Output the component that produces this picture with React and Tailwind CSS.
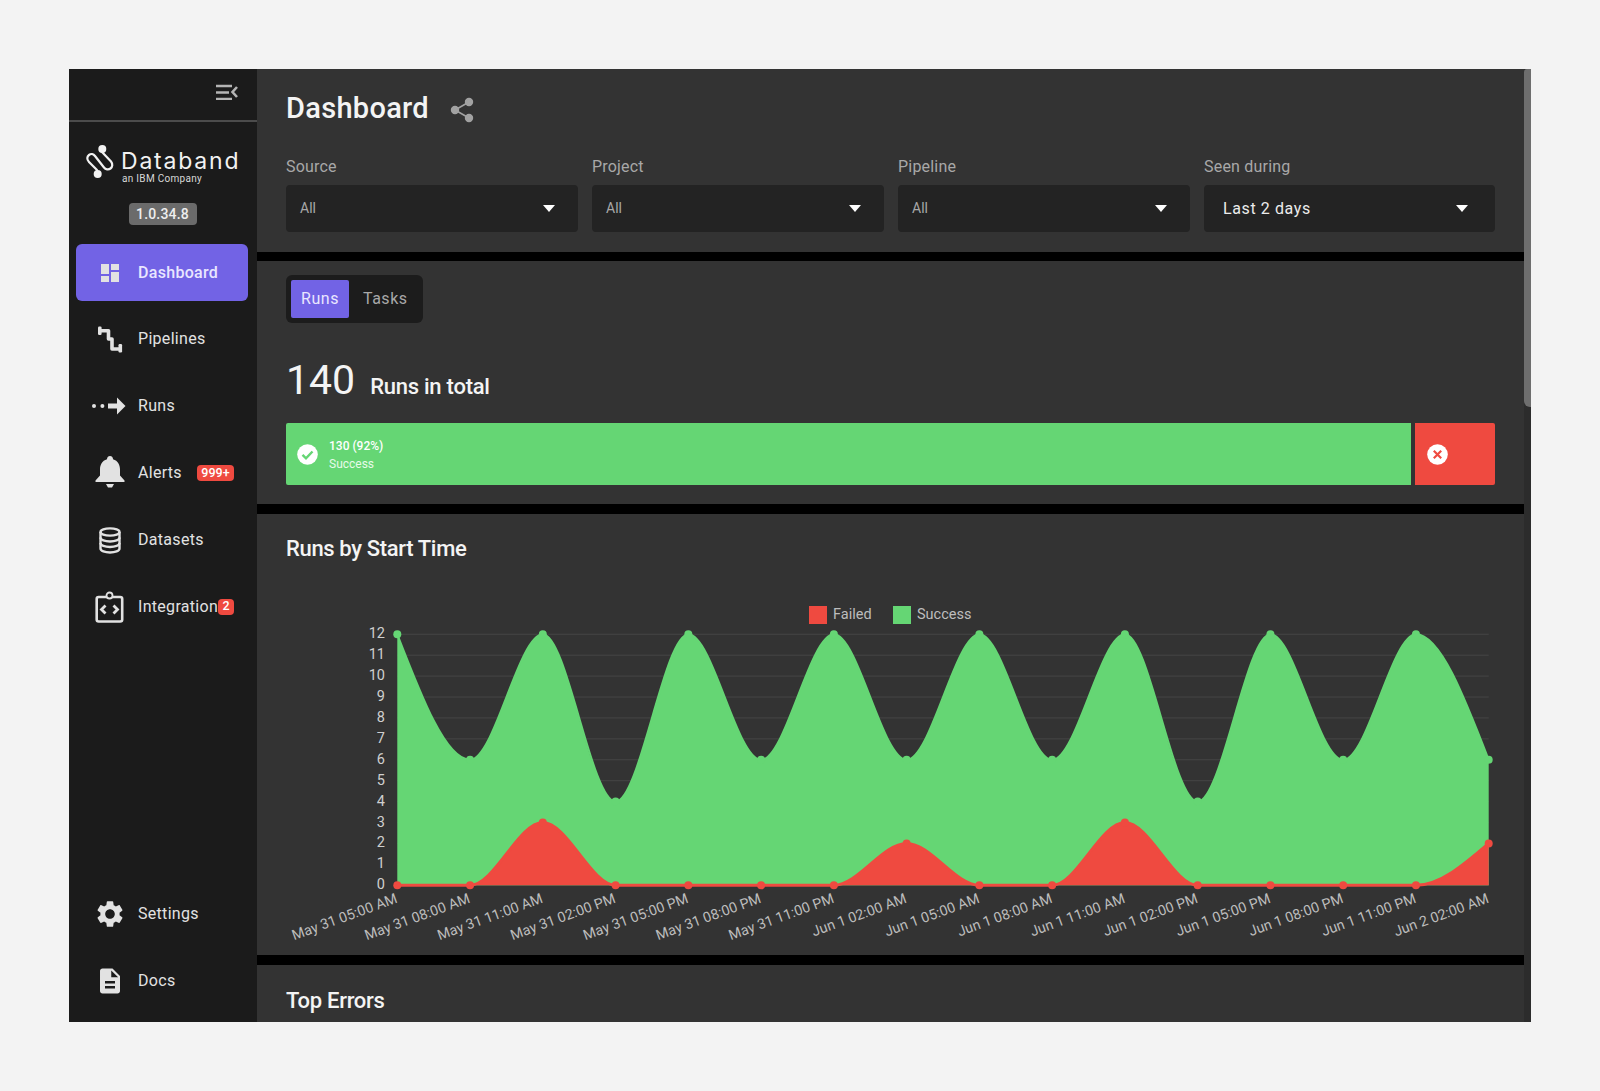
import React from "react";

const GREEN = "#65d674";
const RED = "#ef4a40";

const X0 = 111.3;
const STEP = 72.76;
const Y0 = 265.3;
const UNIT = 20.92;
const totals = [12, 6, 12, 4, 12, 6, 12, 6, 12, 6, 12, 4, 12, 6, 12, 6];
const failed = [0, 0, 3, 0, 0, 0, 0, 2, 0, 0, 3, 0, 0, 0, 0, 2];
const ticks = [
  "May 31 05:00 AM", "May 31 08:00 AM", "May 31 11:00 AM", "May 31 02:00 PM",
  "May 31 05:00 PM", "May 31 08:00 PM", "May 31 11:00 PM", "Jun 1 02:00 AM",
  "Jun 1 05:00 AM", "Jun 1 08:00 AM", "Jun 1 11:00 AM", "Jun 1 02:00 PM",
  "Jun 1 05:00 PM", "Jun 1 08:00 PM", "Jun 1 11:00 PM", "Jun 2 02:00 AM",
];

const px = (i) => X0 + i * STEP;
const py = (v) => Y0 - v * UNIT;

function monotonePath(vals) {
  const ys = vals.map(py);
  const n = ys.length;
  const t = new Array(n).fill(0);
  for (let i = 1; i < n - 1; i++) {
    const s0 = (ys[i] - ys[i - 1]) / STEP;
    const s1 = (ys[i + 1] - ys[i]) / STEP;
    const p = (s0 + s1) / 2;
    t[i] = (Math.sign(s0) + Math.sign(s1)) * Math.min(Math.abs(s0), Math.abs(s1), 0.5 * Math.abs(p)) || 0;
  }
  t[0] = ((3 * (ys[1] - ys[0])) / STEP - t[1]) / 2;
  t[n - 1] = ((3 * (ys[n - 1] - ys[n - 2])) / STEP - t[n - 2]) / 2;
  const dx = STEP / 3;
  let d = `M${px(0)} ${ys[0]}`;
  for (let i = 0; i < n - 1; i++) {
    d += ` C${px(i) + dx} ${ys[i] + dx * t[i]} ${px(i + 1) - dx} ${ys[i + 1] - dx * t[i + 1]} ${px(i + 1)} ${ys[i + 1]}`;
  }
  return d;
}

function Chart() {
  const top = monotonePath(totals);
  const bot = monotonePath(failed);
  const close = ` L${px(15)} ${Y0} L${px(0)} ${Y0} Z`;
  return (
    <svg width="1210" height="330" viewBox="0 0 1210 330" className="block">
      {Array.from({ length: 13 }, (_, v) => (
        <g key={v}>
          <line x1={X0} x2={px(15)} y1={py(v)} y2={py(v)} stroke="#464646" strokeWidth="1" />
          <text x="99" y={py(v) + 4} textAnchor="end" fontSize="14.5" fill="#cfcfcf">{v}</text>
        </g>
      ))}
      <path d={top + close} fill={GREEN} />
      <path d={top} fill="none" stroke={GREEN} strokeWidth="2" />
      {totals.map((v, i) => (
        <circle key={i} cx={px(i)} cy={py(v)} r="4" fill={GREEN} />
      ))}
      <path d={bot + close} fill={RED} />
      <path d={bot} fill="none" stroke={RED} strokeWidth="3" />
      {failed.map((v, i) => (
        <circle key={i} cx={px(i)} cy={py(v)} r="4" fill={RED} />
      ))}
      {ticks.map((s, i) => (
        <text
          key={s}
          x={px(i) + 1}
          y={Y0 + 17}
          textAnchor="end"
          fontSize="14.3"
          fill="#bdbdbd"
          transform={`rotate(-20 ${px(i) + 1} ${Y0 + 17})`}
        >
          {s}
        </text>
      ))}
    </svg>
  );
}

function Logo() {
  return (
    <svg width="30" height="36" viewBox="0 0 30 36" className="shrink-0">
      <path
        d="M13 26L5 18C2.500 15.500 3 12.500 5 11C7 9.500 9.500 10 11 12L20 23.500C21.500 25.500 24.500 26 26.500 24.500C28.500 23 29 20 27 17.500L18 8"
        fill="none"
        stroke="#f2f2f2"
        strokeWidth="2.200"
        strokeLinecap="round"
      />
      <circle cx="18.300" cy="5" r="4" fill="#f2f2f2" />
      <circle cx="13.700" cy="30" r="4" fill="#f2f2f2" />
    </svg>
  );
}

const Ic = ({ children, vb = "0 0 32 32", size = 32 }) => (
  <svg width={size} height={size} viewBox={vb} className="shrink-0 overflow-visible" fill="#e2e2e2">
    {children}
  </svg>
);

const icons = {
  dashboard: (
    <Ic vb="0 0 24 24" size={24}>
      <path d="M3 13h8V3H3v10zm0 8h8v-6H3v6zm10 0h8V11h-8v10zm0-18v6h8V3h-8z" />
    </Ic>
  ),
  pipelines: (
    <Ic>
      <path d="M6 7.700H14.500V16H18V26H25.500" fill="none" stroke="#e2e2e2" strokeWidth="3.600" strokeLinejoin="round" />
      <rect x="4" y="3.500" width="3.600" height="8.500" rx="1.200" />
      <rect x="24.500" y="21" width="3.600" height="8.500" rx="1.200" />
    </Ic>
  ),
  runs: (
    <Ic>
      <circle cx="0" cy="16" r="2" />
      <circle cx="8.400" cy="16" r="2" />
      <rect x="14" y="13.500" width="10" height="5" />
      <path d="M23 7.500L31.500 16L23 24.500Z" />
    </Ic>
  ),
  alerts: (
    <Ic>
      <g transform="translate(-0.500 -1)">
        <path d="M16.500 0c2 0 3 1.500 3 3.200c5 1.600 7 5.600 7 10.300v6l4.500 5v1.500H2v-1.500l4.500-5v-6c0-4.700 2-8.700 7-10.300c0-1.700 1-3.200 3-3.200z" />
        <path d="M12.500 28h8l-2 3.400h-4z" />
      </g>
    </Ic>
  ),
  datasets: (
    <Ic>
      <g fill="none" stroke="#e2e2e2" strokeWidth="2.400">
        <ellipse cx="16" cy="8" rx="9.500" ry="3.600" />
        <path d="M6.500 8V24.500C6.500 27 11 28.500 16 28.500S25.500 27 25.500 24.500V8" />
        <path d="M6.500 13.500C6.500 16 11 17.500 16 17.500S25.500 16 25.500 13.500" />
        <path d="M6.500 19C6.500 21.500 11 23 16 23S25.500 21.500 25.500 19" />
      </g>
    </Ic>
  ),
  integration: (
    <Ic>
      <rect x="2.700" y="6" width="25.500" height="24.500" rx="2" fill="none" stroke="#e2e2e2" strokeWidth="2.600" />
      <circle cx="15.500" cy="4.500" r="3" fill="#1b1b1b" stroke="#e2e2e2" strokeWidth="1.800" />
      <path d="M11.500 14.500L7.500 18.500L11.500 22.500M19.500 14.500L23.500 18.500L19.500 22.500" fill="none" stroke="#e2e2e2" strokeWidth="2.800" />
    </Ic>
  ),
  settings: (
    <Ic vb="0 0 24 24">
      <path d="M19.14 12.94c.04-.3.06-.61.06-.94 0-.32-.02-.64-.07-.94l2.03-1.58c.18-.14.23-.41.12-.61l-1.92-3.32c-.12-.22-.37-.29-.59-.22l-2.39.96c-.5-.38-1.03-.7-1.62-.94l-.36-2.54c-.04-.24-.24-.41-.48-.41h-3.84c-.24 0-.43.17-.47.41l-.36 2.54c-.59.24-1.13.57-1.62.94l-2.39-.96c-.22-.08-.47 0-.59.22L2.74 8.87c-.12.21-.08.47.12.61l2.03 1.58c-.05.3-.09.63-.09.94s.02.64.07.94l-2.03 1.58c-.18.14-.23.41-.12.61l1.92 3.32c.12.22.37.29.59.22l2.39-.96c.5.38 1.03.7 1.62.94l.36 2.54c.05.24.24.41.48.41h3.84c.24 0 .44-.17.47-.41l.36-2.54c.59-.24 1.13-.56 1.62-.94l2.39.96c.22.08.47 0 .59-.22l1.92-3.32c.12-.22.07-.47-.12-.61l-2.01-1.58zM12 15.600c-1.980 0-3.600-1.620-3.600-3.600s1.620-3.600 3.600-3.600 3.600 1.620 3.600 3.600-1.620 3.600-3.600 3.600z" />
    </Ic>
  ),
  docs: (
    <Ic vb="0 0 24 24" size={30}>
      <path d="M14 2H6c-1.100 0-1.990.900-1.990 2L4 20c0 1.100.890 2 1.990 2H18c1.100 0 2-.900 2-2V8l-6-6zm2 16H8v-2h8v2zm0-4H8v-2h8v2zm-3-5V3.500L18.500 9H13z" />
    </Ic>
  ),
};

function NavItem({ icon, label, active, badge, badgeClass }) {
  return (
    <div
      className={`h-[57px] mx-[7px] w-[172px] rounded-[6px] flex items-center pr-[14px] text-[16px] ${
        active ? "bg-[#7263e5] text-[#e9e6ff] font-medium" : "text-[#e2e2e2]"
      }`}
    >
      <span className="w-[62px] pl-[5px] shrink-0 flex items-center justify-center">{icons[icon]}</span>
      <span className="whitespace-nowrap tracking-[0.3px]">{label}</span>
      {badge && (
        <span className={`ml-auto h-[16px] rounded-[4px] bg-[#ef4a40] text-white text-[12.500px] font-medium flex items-center justify-center ${badgeClass}`}>
          {badge}
        </span>
      )}
    </div>
  );
}

function Select({ label, value, bright }) {
  return (
    <div className="w-[292px] last:w-[291px]">
      <div className="h-[24px] text-[16px] leading-[24px] text-[#a8a8a8] mb-[6px] tracking-[0.2px]">{label}</div>
      <div className={`h-[47px] rounded-[4px] bg-[#232323] flex items-center justify-between pl-[14px] ${bright ? "pr-[27px]" : "pr-[23px]"}`}>
        {bright ? (
          <span className="text-[16px] text-[#ececec] pl-[5px] tracking-[0.6px]">{value}</span>
        ) : (
          <span className="text-[14px] text-[#a8a8a8]">{value}</span>
        )}
        <svg width="12" height="7" viewBox="0 0 12 7" fill="#fff"><path d="M0 0H12L6 7Z" /></svg>
      </div>
    </div>
  );
}

export default function App() {
  return (
    <div className="w-[1600px] h-[1091px] bg-[#f3f3f3] pt-[69px] pl-[69px] [font-family:Roboto,sans-serif] overflow-hidden">
      <div className="w-[1462px] h-[953px] flex overflow-hidden">
        <aside className="w-[188px] shrink-0 bg-[#1b1b1b] flex flex-col">
          <div className="h-[53px] border-b-2 border-[#4c4c4c] flex justify-end items-start pt-[15px] pr-[19px]">
            <svg width="22" height="16" viewBox="0 0 22 16" fill="none" stroke="#b4b4b4" strokeWidth="2.600">
              <path d="M0 2H16M0 8.500H13M0 15H16" />
              <path d="M21 3L16.500 8L21 13" />
            </svg>
          </div>
          <div className="h-[122px] flex flex-col pt-[22px]">
            <div className="flex items-start ml-[15px]">
              <Logo />
              <div className="pl-[7px]">
                <div className="text-[23px] leading-[23px] font-normal text-[#f2f2f2] tracking-[1.800px] [font-family:Inter,sans-serif] mt-[6px]">Databand</div>
                <div className="pl-[1px] text-[10px] leading-[11px] text-[#d8d8d8] tracking-[0.300px]">an IBM Company</div>
              </div>
            </div>
            <div className="self-center -ml-[1px] mt-[19px] h-[22px] w-[68px] rounded-[4px] bg-[#6b6b6b] text-[#eeeeee] text-[14px] font-medium tracking-[0.2px] flex items-center justify-center">1.0.34.8</div>
          </div>
          <div className="flex flex-col gap-[9.850px]">
            <NavItem icon="dashboard" label="Dashboard" active />
            <NavItem icon="pipelines" label="Pipelines" />
            <NavItem icon="runs" label="Runs" />
            <NavItem icon="alerts" label="Alerts" badge="999+" badgeClass="w-[37px]" />
            <NavItem icon="datasets" label="Datasets" />
            <NavItem icon="integration" label="Integration" badge="2" badgeClass="w-[16px]" />
          </div>
          <div className="mt-auto flex flex-col gap-[10px] pb-[13px]">
            <NavItem icon="settings" label="Settings" />
            <NavItem icon="docs" label="Docs" />
          </div>
        </aside>

        <main className="w-[1267px] shrink-0 bg-black flex flex-col overflow-hidden">
          <section className="h-[183px] shrink-0 bg-[#333333] pl-[29px] pr-[28px] pt-[20px]">
            <div className="flex items-center h-[39px]">
              <h1 className="text-[29px] leading-[39px] font-medium text-[#f4f4f4] tracking-[0.300px]">Dashboard</h1>
              <svg width="24" height="26" viewBox="0 0 24 26" className="ml-[21px] mt-[2px]" fill="#a2a2a2" stroke="#a2a2a2" strokeWidth="1.600">
                <circle cx="19" cy="5" r="3.400" />
                <circle cx="5" cy="13" r="3.400" />
                <circle cx="19" cy="21" r="3.400" />
                <path d="M19 5L5 13L19 21" fill="none" />
              </svg>
            </div>
            <div className="flex gap-[14px] mt-[27px]">
              <Select label="Source" value="All" />
              <Select label="Project" value="All" />
              <Select label="Pipeline" value="All" />
              <Select label="Seen during" value="Last 2 days" bright />
            </div>
          </section>

          <section className="h-[243px] shrink-0 mt-[9px] bg-[#333333] pl-[29px] pr-[28px] pt-[14px]">
            <div className="w-[137px] h-[48px] rounded-[6px] bg-[#1c1c1c] flex items-center pl-[5px] text-[16px] tracking-[0.5px]">
              <span className="w-[58px] h-[38px] rounded-[2px] bg-[#7263e5] text-[#e9e6ff] flex items-center justify-center">Runs</span>
              <span className="ml-[14px] text-[#a8a8a8]">Tasks</span>
            </div>
            <div className="flex items-baseline mt-[29px] h-[56px]">
              <span className="text-[41px] leading-[56px] font-normal text-[#f4f4f4]">140</span>
              <span className="ml-[15px] text-[22px] font-medium text-[#f4f4f4] tracking-[-0.250px]">Runs in total</span>
            </div>
            <div className="flex gap-[4px] mt-[15px] h-[62px]">
              <div className="w-[1125px] rounded-l-[2px] bg-[#65d674] flex items-center pl-[11px]">
                <svg width="21" height="21" viewBox="0 0 21 21">
                  <circle cx="10.500" cy="10.500" r="10.300" fill="#fff" />
                  <path d="M5.500 10.800L9 14.300L15.500 7.500" fill="none" stroke={GREEN} strokeWidth="2.400" />
                </svg>
                <div className="ml-[11px] text-[12px] text-white mt-[2px]">
                  <div className="font-medium leading-[18px]">130 (92%)</div>
                  <div className="leading-[18px] text-[#e6fbe9]">Success</div>
                </div>
              </div>
              <div className="w-[79.500px] rounded-r-[2px] bg-[#ef4a40] flex items-center pl-[12px]">
                <svg width="21" height="21" viewBox="0 0 21 21">
                  <circle cx="10.500" cy="10.500" r="10.300" fill="#fff" />
                  <path d="M6.800 6.800L14.200 14.200M14.200 6.800L6.800 14.200" fill="none" stroke={RED} strokeWidth="2.200" />
                </svg>
              </div>
            </div>
          </section>

          <section className="h-[441px] shrink-0 mt-[10px] bg-[#333333] pl-[29px] pr-[28px] pt-[20px]">
            <h2 className="text-[22px] leading-[30px] font-medium text-[#f4f4f4] tracking-[-0.350px]">Runs by Start Time</h2>
            <div className="flex items-center mt-[42px] h-[18px] pl-[523px] text-[14.500px] text-[#bdbdbd]">
              <span className="w-[18px] h-[18px] bg-[#ef4a40]" />
              <span className="ml-[6px] w-[60px]">Failed</span>
              <span className="w-[18px] h-[18px] bg-[#65d674]" />
              <span className="ml-[6px]">Success</span>
            </div>
            <div className="-mt-[4px]"><Chart /></div>
          </section>

          <section className="flex-1 mt-[10px] bg-[#333333] pl-[29px] pr-[28px] pt-[21px]">
            <h2 className="text-[22px] leading-[30px] font-medium text-[#f4f4f4] tracking-[-0.300px]">Top Errors</h2>
          </section>
        </main>

        <div className="flex-1 bg-[#2c2c2c]">
          <div className="h-[338px] bg-[#6e6e6e] rounded-bl-[6px] rounded-tl-[3px]" />
        </div>
      </div>
    </div>
  );
}
